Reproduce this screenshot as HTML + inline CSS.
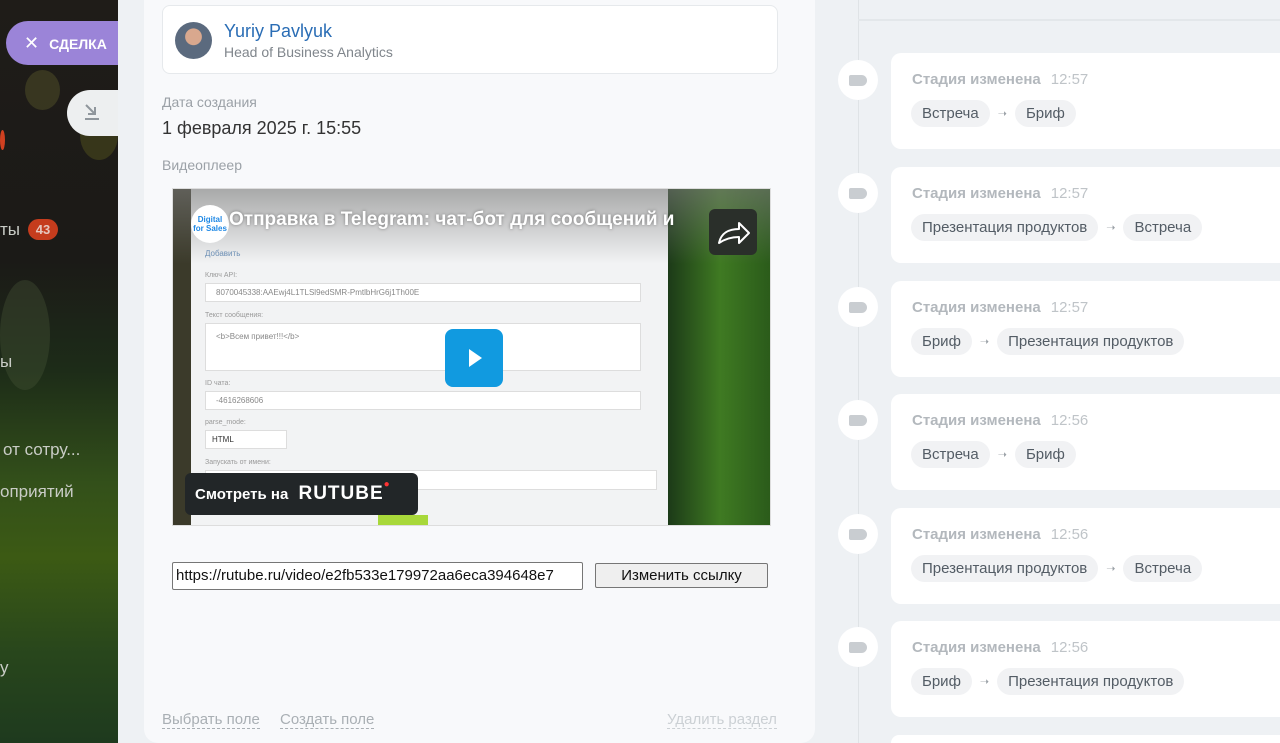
<!DOCTYPE html>
<html><head><meta charset="utf-8"><style>
*{box-sizing:border-box;margin:0;padding:0}
html,body{width:1280px;height:743px;overflow:hidden}
body{background:#eef1f4;font-family:"Liberation Sans","DejaVu Sans",sans-serif;position:relative}
.side{position:absolute;left:0;top:0;width:118px;height:743px;background:linear-gradient(180deg,#1f1c18 0%,#1b1a17 35%,#1d2c18 50%,#33501a 65%,#3c5a14 75%,#28461c 88%,#1e3a1e 100%);overflow:hidden}
.blob{position:absolute;border-radius:50%;opacity:.35}
.side .t{position:absolute;color:#c9ccc6;font-size:17px;white-space:nowrap}
.deal{position:absolute;left:6px;top:21px;width:112px;height:44px;border-radius:22px 0 0 22px;background:#9b84d8;color:#fff;font-weight:bold;font-size:14px;line-height:44px;padding-left:18px;white-space:nowrap}
.dl{position:absolute;left:67px;top:90px;width:51px;height:46px;border-radius:23px 0 0 23px;background:#edeff0}
.main{position:absolute;left:144px;top:0;width:671px;height:743px;background:#f8f9fb;border-radius:0 0 14px 14px}
.user{position:absolute;left:162px;top:5px;width:616px;height:69px;background:#fff;border:1px solid #e6e9ec;border-radius:8px}
.lbl{position:absolute;color:#9ba1a7;font-size:14px}
.video{position:absolute;left:172px;top:188px;width:599px;height:338px;background:#3a4a2a;overflow:hidden;border:1px solid #ddd}
.tl{position:absolute;left:858px;top:0;width:1px;height:743px;background:#dfe3e6}
.card{position:absolute;left:891px;width:389px;height:96px;background:#fff;border-radius:10px 0 0 10px}
.dot{position:absolute;left:838px;width:40px;height:40px;border-radius:50%;background:#fff}
.dot i{position:absolute;left:11px;top:15px;width:18px;height:11px;background:#c9cdd1;border-radius:2px 6px 6px 2px}
.card .h{position:absolute;left:21px;top:18px;font-size:15px;font-weight:bold;color:#b3b8bd}
.card .h span{font-weight:normal;margin-left:10px;font-size:15px;color:#bfc4c8}
.pills{position:absolute;left:20px;top:47px;display:flex;align-items:center;gap:8px;font-size:15px;color:#535c65}
.pill{background:#f1f2f4;border-radius:14px;padding:5px 11px}
.ar{color:#9aa0a6;font-size:11px}
.link{color:#a9afb4;font-size:15px;border-bottom:1px dashed #a9afb4;position:absolute;top:711px}
</style></head><body>
<div class="side">
 <div class="blob" style="left:25px;top:70px;width:35px;height:40px;background:#6a6a30"></div>
 <div class="blob" style="left:80px;top:110px;width:38px;height:50px;background:#6a6a20"></div>
 <div class="blob" style="left:0;top:280px;width:50px;height:110px;background:#4a5a3a"></div>
 <div class="blob" style="left:0;top:130px;width:5px;height:20px;background:#d04020;opacity:1"></div>
 <div class="t" style="left:0;top:220px">ты</div>
 <div style="position:absolute;left:28px;top:219px;width:30px;height:21px;border-radius:11px;background:#c53c1d;color:#e6c7be;font-size:13px;font-weight:bold;text-align:center;line-height:21px">43</div>
 <div class="t" style="left:0;top:352px">ы</div>
 <div class="t" style="left:3px;top:440px">от сотру...</div>
 <div class="t" style="left:0;top:482px">оприятий</div>
 <div class="t" style="left:0;top:658px">у</div>
</div>
<div class="deal"><span style="font-weight:normal;font-size:18px;margin-right:10px">✕</span>СДЕЛКА</div>
<div class="dl"><svg width="30" height="46" viewBox="0 0 30 46" style="position:absolute;left:12px;top:0"><path d="M7 15l9 9M16 17v7h-7M6 29h14" stroke="#8f969c" stroke-width="2" fill="none"/></svg></div>
<div class="main"></div>
<div class="user">
 <div style="position:absolute;left:12px;top:16px;width:37px;height:37px;border-radius:50%;background:radial-gradient(circle at 50% 40%,#d9a88e 0 28%,#5b6a7e 30% 100%)"></div>
 <div style="position:absolute;left:61px;top:15px;color:#2a6db5;font-size:18px">Yuriy Pavlyuk</div>
 <div style="position:absolute;left:61px;top:38px;color:#80868c;font-size:14px">Head of Business Analytics</div>
</div>
<div class="lbl" style="left:162px;top:94px">Дата создания</div>
<div style="position:absolute;left:162px;top:118px;color:#333;font-size:18px">1 февраля 2025 г. 15:55</div>
<div class="lbl" style="left:162px;top:157px">Видеоплеер</div>
<div class="video">
 <div style="position:absolute;left:0;top:0;width:18px;height:338px;background:#3b3a2a"></div>
 <div style="position:absolute;left:495px;top:0;width:104px;height:338px;background:linear-gradient(90deg,#1c3a18,#3f7a22,#2a5a1a)"></div>
 <div style="position:absolute;left:18px;top:0;width:477px;height:338px;background:#f2f3f4"></div>
 <div style="position:absolute;left:0;top:0;width:599px;height:75px;background:linear-gradient(180deg,rgba(120,120,120,.6),rgba(200,200,200,0))"></div>
 <div style="position:absolute;left:32px;top:94px;width:436px;height:19px;background:#fff;border:1px solid #ddd;font-size:8px;color:#888;padding:4px 10px">8070045338:AAEwj4L1TLSl9edSMR-PmtlbHrG6j1Th00E</div>
 <div style="position:absolute;left:32px;top:134px;width:436px;height:48px;background:#fff;border:1px solid #ddd;font-size:8px;color:#888;padding:8px 10px">&lt;b&gt;Всем привет!!!&lt;/b&gt;</div>
 <div style="position:absolute;left:32px;top:202px;width:436px;height:19px;background:#fff;border:1px solid #ddd;font-size:8px;color:#888;padding:4px 10px">-4616268606</div>
 <div style="position:absolute;left:32px;top:241px;width:82px;height:19px;background:#fff;border:1px solid #ddd;font-size:8px;color:#333;padding:4px 6px">HTML</div>
 <div style="position:absolute;left:32px;top:281px;width:452px;height:20px;background:#fff;border:1px solid #ddd"></div>
 <div style="position:absolute;left:32px;top:60px;font-size:8px;color:#6c8fb5">Добавить</div>
 <div style="position:absolute;left:32px;top:83px;font-size:7px;color:#999">Ключ API:</div>
 <div style="position:absolute;left:32px;top:123px;font-size:7px;color:#999">Текст сообщения:</div>
 <div style="position:absolute;left:32px;top:191px;font-size:7px;color:#999">ID чата:</div>
 <div style="position:absolute;left:32px;top:230px;font-size:7px;color:#999">parse_mode:</div>
 <div style="position:absolute;left:32px;top:270px;font-size:7px;color:#999">Запускать от имени:</div>
 <div style="position:absolute;left:205px;top:326px;width:50px;height:12px;background:#a8d83a"></div>
 <div style="position:absolute;left:18px;top:16px;width:38px;height:38px;border-radius:50%;background:#fff;font-size:8px;color:#1e88e5;font-weight:bold;text-align:center;line-height:9px;padding-top:10px">Digital<br>for Sales</div>
 <div style="position:absolute;left:56px;top:20px;color:#fff;font-size:19px;font-weight:bold;text-shadow:0 0 3px rgba(0,0,0,.4);white-space:nowrap">Отправка в Telegram: чат-бот для сообщений и</div>
 <div style="position:absolute;left:536px;top:20px;width:48px;height:46px;border-radius:6px;background:#2a2f2a"><svg width="48" height="46" viewBox="0 0 48 46"><path d="M10 34c2-10 10-14 20-14v-6l10 10-10 10v-6c-8 0-14 2-20 6z" stroke="#fff" stroke-width="2" fill="none" stroke-linejoin="round"/></svg></div>
 <div style="position:absolute;left:272px;top:140px;width:58px;height:58px;border-radius:8px;background:#119ae0"><svg width="58" height="58"><path d="M24 20l13 9-13 9z" fill="#fff"/></svg></div>
 <div style="position:absolute;left:12px;top:284px;width:233px;height:42px;border-radius:6px;background:#222628;color:#fff;font-size:15px;font-weight:bold;line-height:42px;padding-left:10px;white-space:nowrap">Смотреть на <span style="font-size:19px;letter-spacing:1px;margin-left:6px">RUTUBE</span><span style="color:#f33;font-size:10px;vertical-align:top;line-height:24px">●</span></div>
</div>
<div style="position:absolute;left:172px;top:562px;width:411px;height:28px;background:#fff;border:1px solid #767676;border-radius:2px;font-size:15px;color:#111;padding:4px 3px;white-space:nowrap;overflow:hidden">https://rutube.ru/video/e2fb533e179972aa6eca394648e7</div>
<div style="position:absolute;left:595px;top:563px;width:173px;height:25px;background:#efefef;border:1px solid #767676;border-radius:2px;font-size:15px;color:#111;text-align:center;line-height:24px">Изменить ссылку</div>
<div class="link" style="left:162px">Выбрать поле</div>
<div class="link" style="left:280px">Создать поле</div>
<div class="link" style="left:667px;color:#cbd0d4;border-color:#cbd0d4">Удалить раздел</div>
<div class="tl"></div>
<div style="position:absolute;left:858px;top:19px;width:422px;height:2px;background:#e3e7ea"></div>
<div class="dot" style="top:60px"><i></i></div><div class="card" style="top:53px"><div class="h">Стадия изменена<span>12:57</span></div><div class="pills"><span class="pill">Встреча</span><span class="ar">➝</span><span class="pill">Бриф</span></div></div>
<div class="dot" style="top:173px"><i></i></div><div class="card" style="top:167px"><div class="h">Стадия изменена<span>12:57</span></div><div class="pills"><span class="pill">Презентация продуктов</span><span class="ar">➝</span><span class="pill">Встреча</span></div></div>
<div class="dot" style="top:287px"><i></i></div><div class="card" style="top:281px"><div class="h">Стадия изменена<span>12:57</span></div><div class="pills"><span class="pill">Бриф</span><span class="ar">➝</span><span class="pill">Презентация продуктов</span></div></div>
<div class="dot" style="top:400px"><i></i></div><div class="card" style="top:394px"><div class="h">Стадия изменена<span>12:56</span></div><div class="pills"><span class="pill">Встреча</span><span class="ar">➝</span><span class="pill">Бриф</span></div></div>
<div class="dot" style="top:514px"><i></i></div><div class="card" style="top:508px"><div class="h">Стадия изменена<span>12:56</span></div><div class="pills"><span class="pill">Презентация продуктов</span><span class="ar">➝</span><span class="pill">Встреча</span></div></div>
<div class="dot" style="top:627px"><i></i></div><div class="card" style="top:621px"><div class="h">Стадия изменена<span>12:56</span></div><div class="pills"><span class="pill">Бриф</span><span class="ar">➝</span><span class="pill">Презентация продуктов</span></div></div>
<div class="card" style="top:735px;height:8px;border-radius:10px 0 0 0"></div>
</body></html>
